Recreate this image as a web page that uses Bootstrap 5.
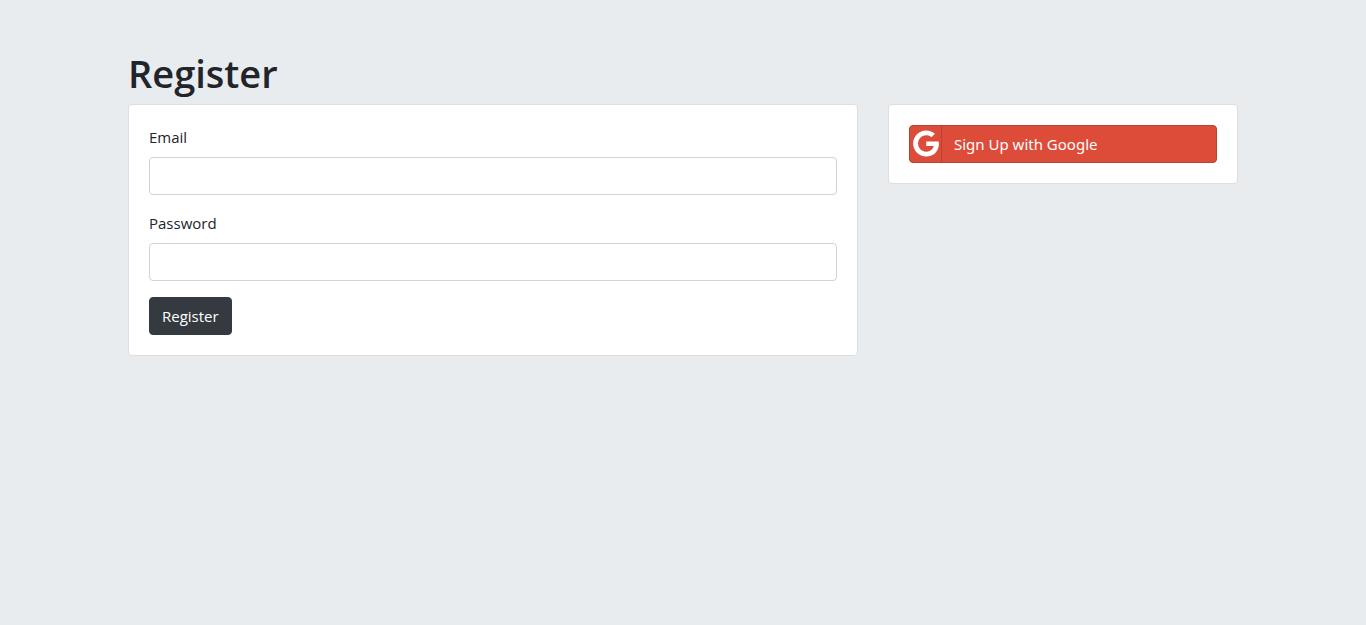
<!DOCTYPE html>
<html lang="en">
<head>
<meta charset="utf-8">
<meta name="viewport" content="width=device-width, initial-scale=1">
<title>Register</title>
<link href="https://cdn.jsdelivr.net/npm/bootstrap@5.3.0/dist/css/bootstrap.min.css" rel="stylesheet">
<style>
  body {
    background: #e8ecef;
    color: #212529;
    font-family: "Segoe UI", "Open Sans", "Noto Sans", sans-serif;
    font-size: 16px;
  }
  h1 { font-size: 38px; font-weight: 600; line-height: 50px; margin-bottom: 6px; }
  .container, .row { --bs-gutter-x: 30px; }
  .card {
    --bs-card-border-color: #dfdfdf;
    --bs-card-border-radius: 4px;
    --bs-card-inner-border-radius: 3px;
    --bs-card-spacer-x: 20px;
    --bs-card-spacer-y: 20px;
  }
  .form-label, .btn { font-size: 15px; line-height: 24px; }
  .form-control { border-color: #ced4da; border-radius: 4px; }
  .btn { --bs-btn-border-radius: 4px; }
  .btn-dark { --bs-btn-bg: #343a40; --bs-btn-border-color: #343a40; }
  .btn-google {
    --bs-btn-color: #fff;
    --bs-btn-bg: #dd4b39;
    --bs-btn-border-color: #b94133;
    --bs-btn-hover-color: #fff;
    --bs-btn-hover-bg: #c23321;
    --bs-btn-hover-border-color: #a02b1c;
    font-family: "Segoe UI", "Noto Sans", sans-serif;
  }
  .provider-icon { width: 32px; padding-bottom: 2px; border-right: 1px solid #b94133; }
  .provider-name { padding: 6px 12px; }
</style>
</head>
<body>
<main class="container mt-5">
  <h1>Register</h1>
  <div class="row">
    <div class="col-sm-8">
      <div class="card">
        <div class="card-body">
          <form action="/register" method="post">
            <div class="mb-3">
              <label class="form-label d-block" for="email">Email</label>
              <input type="email" class="form-control" id="email" name="username">
            </div>
            <div class="mb-3">
              <label class="form-label d-block" for="password">Password</label>
              <input type="password" class="form-control" id="password" name="password">
            </div>
            <button type="submit" class="btn btn-dark">Register</button>
          </form>
        </div>
      </div>
    </div>
    <div class="col-sm-4">
      <div class="card">
        <div class="card-body">
          <a class="btn btn-google d-flex align-items-stretch p-0 text-start" href="/auth/google" role="button">
            <span class="provider-icon d-flex align-items-center justify-content-center flex-shrink-0">
              <svg width="26" height="27" viewBox="0 0 488 512" fill="currentColor" aria-hidden="true"><path d="M488 261.8C488 403.3 391.1 504 248 504 110.8 504 0 393.2 0 256S110.8 8 248 8c66.8 0 123 24.5 166.3 64.9l-67.5 64.9C258.5 52.6 94.3 116.6 94.3 256c0 86.5 69.1 156.6 153.7 156.6 98.2 0 135-70.4 140.8-106.9H248v-85.3h236.1c2.3 12.7 3.9 24.9 3.9 41.4z"/></svg>
            </span>
            <span class="provider-name">Sign Up with Google</span>
          </a>
        </div>
      </div>
    </div>
  </div>
</main>
<script src="https://cdn.jsdelivr.net/npm/bootstrap@5.3.0/dist/js/bootstrap.bundle.min.js"></script>
</body>
</html>
